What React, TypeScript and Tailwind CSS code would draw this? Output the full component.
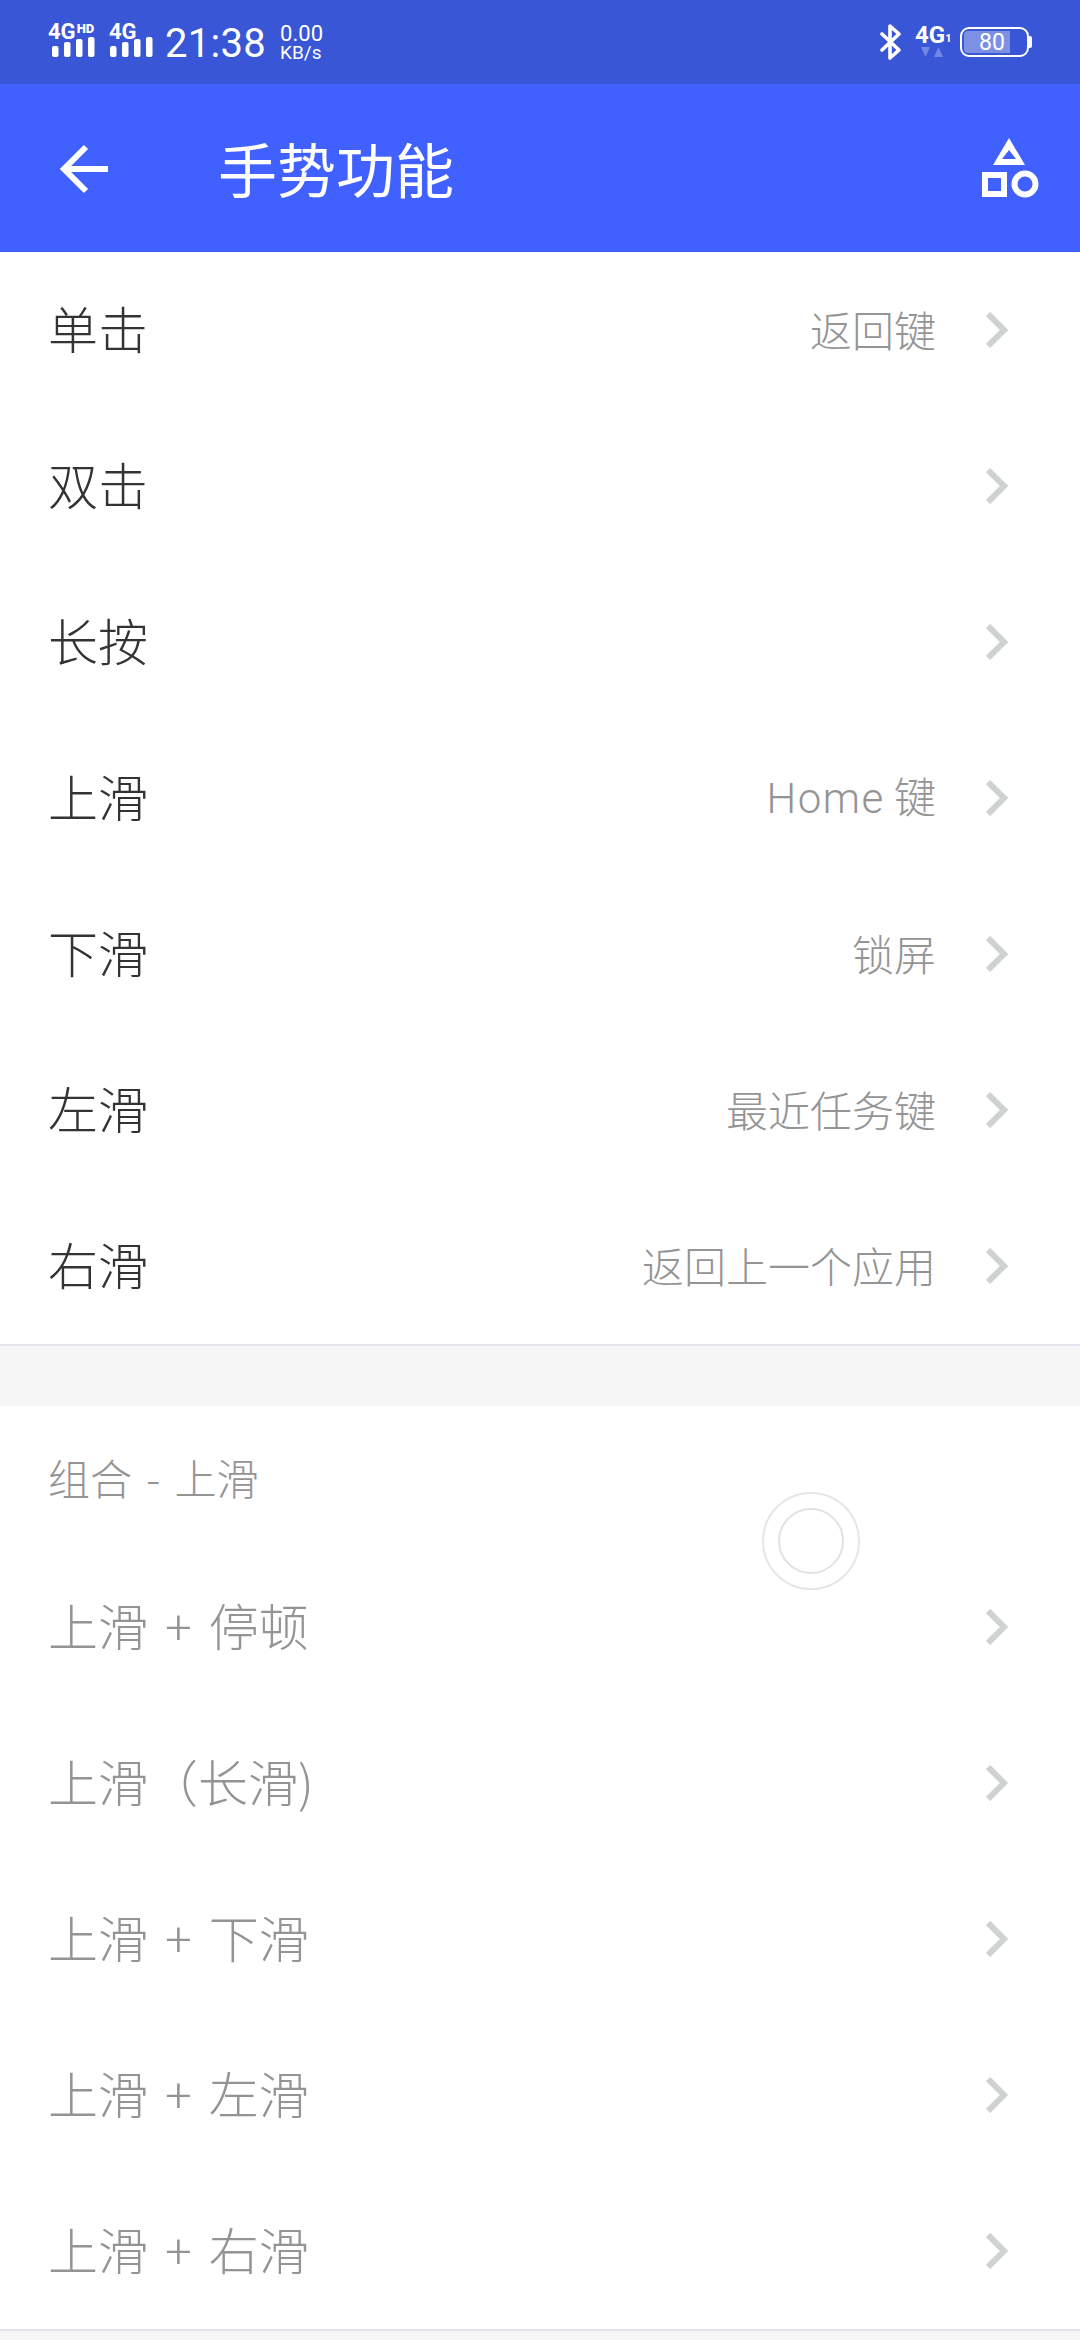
import React from "react";

const font = { fontFamily: '"Noto Sans CJK SC", Roboto, sans-serif' };
const roboto = { fontFamily: "Roboto, sans-serif" };

function Chevron() {
  return (
    <svg width="22" height="36" viewBox="0 0 22 36" className="shrink-0">
      <path d="M2 2 L18 18 L2 34" fill="none" stroke="#cfd2d2" strokeWidth="6" />
    </svg>
  );
}

function Row({ label, value, dim }: { label: string; value?: React.ReactNode; dim?: boolean }) {
  return (
    <div className="h-[156px] flex items-center pl-[48px] pr-[72px]">
      <span className={`text-[50px] font-light leading-none flex-1 whitespace-pre mb-[6px] [word-spacing:6px] ${dim ? "text-[#949494]" : "text-[#333333]"}`}>{label}</span>
      {value && <span className="text-[42px] font-light leading-none text-[#949494] mr-[50px] mb-[2px] whitespace-pre">{value}</span>}
      <Chevron />
    </div>
  );
}

function Signal() {
  const bars = [
    { x: 0, h: 11 },
    { x: 12, h: 15 },
    { x: 24, h: 18 },
    { x: 36, h: 20 },
  ];
  return (
    <svg width="43" height="20" viewBox="0 0 43 20" className="block">
      {bars.map((b) => (
        <rect key={b.x} x={b.x} y={20 - b.h} width="6.5" height={b.h} rx="2" fill="#fff" />
      ))}
    </svg>
  );
}

export default function App() {
  return (
    <div className="w-[1080px] h-[2340px] bg-[#f6f6f6] overflow-hidden relative flex flex-col" style={font}>
      {/* Status bar */}
      <div className="h-[84px] bg-[#3856d6] flex items-center text-white shrink-0 pl-[48px] pr-[48px]">
        <div className="flex flex-col w-[51px] mt-[-4px]">
          <div className="flex items-start h-[17px] leading-none" style={roboto}>
            <span className="text-[22px] font-bold leading-[17px]">4G</span>
            <span className="text-[13px] font-black leading-[11px] ml-[1px]">HD</span>
          </div>
          <div className="ml-[4px] mt-[-3px]"><Signal /></div>
        </div>
        <div className="flex flex-col w-[44px] ml-[10px] mt-[-4px]">
          <div className="h-[17px] text-[22px] font-bold leading-[17px]" style={roboto}>4G</div>
          <div className="ml-[1px] mt-[-3px]"><Signal /></div>
        </div>
        <span className="ml-[12px] mt-[3px] text-[40px] leading-none tracking-[0.3px]" style={roboto}>21:38</span>
        <div className="ml-[14px] mt-[1px] flex flex-col leading-none" style={roboto}>
          <span className="text-[22px] leading-[21px]">0.00</span>
          <span className="text-[19px] leading-[18px]">KB/s</span>
        </div>
        <div className="flex-1" />
        <svg width="24" height="36" viewBox="0 0 24 36" className="mr-[12px]">
          <path d="M3 10 L20 26 L11 34 L11 2 L20 10 L3 26" fill="none" stroke="#fff" strokeWidth="3.6" strokeLinejoin="round" strokeLinecap="round" />
        </svg>
        <div className="flex flex-col w-[36px] mt-[-2px] mr-[9px]">
          <div className="flex items-end h-[20px] leading-none" style={roboto}>
            <span className="text-[24px] font-bold leading-[20px]">4G</span>
            <span className="text-[11px] font-bold leading-[12px]">1</span>
          </div>
          <svg width="22" height="10" viewBox="0 0 22 10" className="ml-[6px] mt-[2px]">
            <path d="M0 0 H9 L4.5 10 Z M13 10 H22 L17.5 0 Z" fill="#fff" fillOpacity="0.3" />
          </svg>
        </div>
        <div className="flex items-center">
          <div className="relative w-[69px] h-[30px] border-[2.5px] border-white rounded-[9px] flex items-center">
            <div className="absolute left-[2px] top-[2px] bottom-[2px] w-[46px] bg-white/35 rounded-l-[4px]" />
            <span className="relative ml-[17px] text-[23px] leading-none" style={roboto}>80</span>
          </div>
          <div className="w-[3px] h-[12px] bg-white rounded-r-[2px]" />
        </div>
      </div>

      {/* Header */}
      <div className="h-[168px] bg-[#4060ff] flex items-center text-white shrink-0 pl-[60px] pr-[41px]">
        <svg width="48" height="50" viewBox="0 0 48 50" className="shrink-0 mb-[-2px]">
          <path d="M48 25 H4 M26 3 L4 25 L26 47" fill="none" stroke="#fff" strokeWidth="6" />
        </svg>
        <span className="ml-[110px] text-[59px] leading-none flex-1 mb-[2px]">手势功能</span>
        <svg width="57" height="60" viewBox="0 0 57 60" className="shrink-0">
          <path fillRule="evenodd" d="M27 0 L43 27 H11 Z M27 12 L20 21 H34 Z" fill="#fff" />
          <rect x="3" y="37" width="19" height="19" fill="none" stroke="#fff" strokeWidth="6" />
          <circle cx="43" cy="46" r="10.5" fill="none" stroke="#fff" strokeWidth="6" />
        </svg>
      </div>

      {/* Primary list */}
      <div className="bg-white border-b-2 border-[#e2e5ec] shrink-0">
        <Row label="单击" value="返回键" />
        <Row label="双击" />
        <Row label="长按" />
        <Row label="上滑" value={<><span className="tracking-[1.5px]" style={roboto}>Home</span> 键</>} />
        <Row label="下滑" value="锁屏" />
        <Row label="左滑" value="最近任务键" />
        <Row label="右滑" value="返回上一个应用" />
      </div>

      <div className="h-[60px] shrink-0" />

      {/* Combination list */}
      <div className="bg-white border-b-2 border-[#e2e5ec] shrink-0">
        <div className="h-[143px] pl-[48px] pt-[50px] text-[42px] font-light leading-none text-[#949494] [word-spacing:5px]">组合 - 上滑</div>
        <Row label="上滑 + 停顿" dim />
        <Row label="上滑（长滑)" dim />
        <Row label="上滑 + 下滑" dim />
        <Row label="上滑 + 左滑" dim />
        <Row label="上滑 + 右滑" dim />
      </div>

      {/* Floating touch ball */}
      <div className="absolute left-[762px] top-[1492px] w-[98px] h-[98px] rounded-full border-2 border-[#e6e6e6] flex items-center justify-center">
        <div className="w-[66px] h-[66px] rounded-full border-2 border-[#e2e2e2]" />
      </div>
    </div>
  );
}
